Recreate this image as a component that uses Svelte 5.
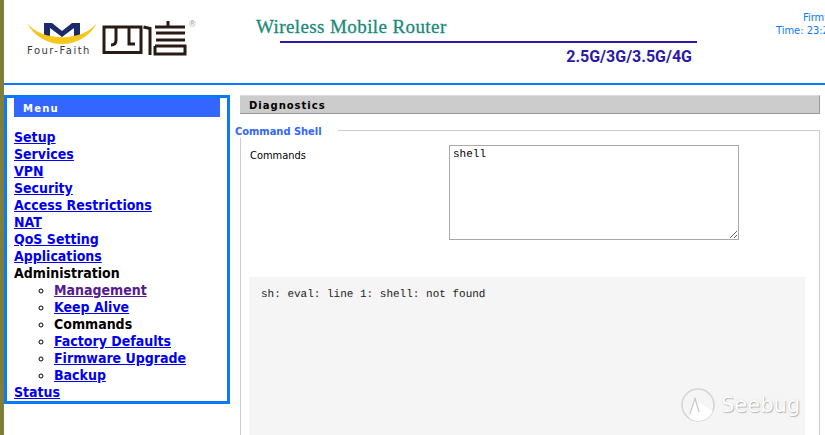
<script lang="ts">
  const adminLinks = [
    { label: "Management", visited: true },
    { label: "Keep Alive" },
    { label: "Commands", current: true },
    { label: "Factory Defaults" },
    { label: "Firmware Upgrade" },
    { label: "Backup" },
  ];
  const topLinks = ["Setup", "Services", "VPN", "Security", "Access Restrictions", "NAT", "QoS Setting", "Applications"];
</script>

<div class="page">
  <header class="header">
    <div class="logo">
      <svg width="200" height="60" viewBox="4 0 200 60" aria-label="Four-Faith logo">
        <path d="M44 38 V23 H52 L62 31 L72 23 H80 V38 H74 V28 L62 37 L50 28 V38Z" fill="#1b2a6b" />
        <path d="M27 23 C42 42 82 42 97 23 C82 51 42 51 27 23Z" fill="#f7c61a" />
        <text x="27" y="54" class="logo__name">Four-Faith</text>
        <g fill="none" stroke="#2a1a14" stroke-width="3">
          <path d="M104 27 H141 V52.500 H104Z" />
          <path d="M116 27 V40 Q116 45 111 45 M129 27 V44 H135" />
          <path d="M143.500 27 L150 28.500 V55" />
          <path d="M155 27 H185 M168 21 V27 M156 33 H185 M156 40 H185 M155 46 H185 V54 H155 V46" />
        </g>
        <text x="189" y="27" class="logo__mark">®</text>
      </svg>
    </div>
    <div class="product">
      <h1 class="product__title">Wireless Mobile Router</h1>
      <div class="product__rule"></div>
      <div class="product__bands">2.5G/3G/3.5G/4G</div>
    </div>
    <div class="status-info">
      <div>Firmware: v1.0</div>
      <div>Time: 23:28:40 up 1 day</div>
    </div>
  </header>

  <main class="body">
    <nav class="menu">
      <div class="menu__title">Menu</div>
      <div class="menu__links">
        {#each topLinks as link}
          <div><a href="#top">{link}</a></div>
        {/each}
        <div class="menu__current">Administration</div>
        <ul class="menu__sub">
          {#each adminLinks as item}
            <li>
              {#if item.current}
                <span class="menu__current">{item.label}</span>
              {:else}
                <a href="#top" class:visited={item.visited}>{item.label}</a>
              {/if}
            </li>
          {/each}
        </ul>
        <div><a href="#top">Status</a></div>
      </div>
    </nav>

    <section class="content">
      <h2 class="content__title">Diagnostics</h2>
      <fieldset class="panel">
        <legend class="panel__legend">Command Shell</legend>
        <div class="panel__row">
          <div class="panel__label">Commands</div>
          <textarea class="panel__input">shell</textarea>
        </div>
        <pre class="panel__output">sh: eval: line 1: shell: not found</pre>
      </fieldset>
    </section>
  </main>

  <div class="watermark">
    <svg width="38" height="38" viewBox="0 0 38 38">
      <circle cx="18" cy="19" r="16" fill="none" stroke="#d4d4d4" stroke-width="1.5" />
      <path d="M13 13 L33 25 A16 16 0 0 1 9 32 Z" fill="#fff" />
      <path d="M15 12 L19 26 M15 12 L10 28" stroke="#c8c8c8" stroke-width="1.2" fill="none" />
    </svg>
    <span>Seebug</span>
  </div>
</div>

<style>
  :global(body) {
    margin: 0;
    background: #fff;
    overflow: hidden;
  }

  .page {
    position: relative;
    width: 825px;
    height: 435px;
    overflow: hidden;
    box-sizing: border-box;
    border-left: 4px solid #7f7f3a;
    font-family: "DejaVu Sans Condensed", "DejaVu Sans", sans-serif;
  }

  .header {
    display: flex;
    height: 83px;
    border-bottom: 2px solid #0a78ff;
  }

  .logo {
    width: 248px;
    flex: none;
  }

  .logo__name {
    font: 10px "DejaVu Sans", sans-serif;
    letter-spacing: 1.5px;
    fill: #3a3a3a;
  }

  .logo__mark {
    font: 9px "Liberation Sans", sans-serif;
    fill: #999;
  }

  .product {
    width: 445px;
    flex: none;
  }

  .product__title {
    margin: 16px 0 0 4px;
    font: 400 19px/22px "Liberation Serif", serif;
    letter-spacing: 0.4px;
    color: #1a8a78;
    -webkit-text-stroke: 0.3px #1a8a78;
  }

  .product__rule {
    height: 2px;
    margin: 3px 0 0 28px;
    background: #2b1aa8;
  }

  .product__bands {
    margin-top: 4px;
    padding-right: 5px;
    text-align: right;
    font: 700 16px/19px Roboto, sans-serif;
    color: #2b1aa8;
  }

  .status-info {
    flex: 1;
    min-width: 0;
    padding-top: 11px;
    font-size: 11px;
    line-height: 13px;
    color: #0a78ff;
    white-space: nowrap;
    overflow: hidden;
  }

  .status-info div:first-child {
    margin-left: 106px;
  }

  .status-info div:last-child {
    margin-left: 79px;
  }

  .body {
    display: flex;
    align-items: flex-start;
    padding-top: 10px;
  }

  .menu {
    box-sizing: border-box;
    width: 226px;
    flex: none;
    height: 309px;
    border: 3px solid #0a78ff;
    padding: 0 7px;
  }

  .menu__title {
    height: 19px;
    margin-bottom: 12px;
    padding-left: 9px;
    background: #3366ff;
    color: #fff;
    font: 700 10px/21px "DejaVu Sans", sans-serif;
    letter-spacing: 1.2px;
  }

  .menu__links {
    font-size: 14px;
    font-weight: 700;
    line-height: 17px;
  }

  .menu__links a {
    color: #0000ee;
  }

  .menu__links a.visited {
    color: #551a8b;
  }

  .menu__current {
    color: #000;
  }

  .menu__sub {
    margin: 0;
    padding-left: 40px;
    list-style: circle;
  }

  .content {
    flex: 1;
    min-width: 0;
    margin-left: 10px;
    margin-right: 5px;
  }

  .content__title {
    box-sizing: border-box;
    height: 19px;
    margin: 0;
    padding-left: 9px;
    background: #ccc;
    border-top: 1px solid #ddd;
    border-right: 1px solid #999;
    border-bottom: 1px solid #999;
    color: #000;
    font: 700 10px/19px "DejaVu Sans", sans-serif;
    letter-spacing: 1px;
  }

  .panel {
    margin: 9px 0 0;
    padding: 0 14px 0 8px;
    border: 1px solid #ccc;
    height: 320px;
    min-width: 0;
  }

  .panel__legend {
    margin-left: -14px;
    padding: 2px 16px 0 0;
    color: #3366ff;
    font-size: 11px;
    font-weight: 700;
  }

  .panel__row {
    display: flex;
    align-items: flex-start;
    margin-top: 7px;
  }

  .panel__label {
    width: 200px;
    flex: none;
    padding-top: 4px;
    padding-left: 1px;
    margin-right: -1px;
    font-size: 11px;
    line-height: 13px;
    color: #000;
  }

  .panel__input {
    box-sizing: border-box;
    width: 290px;
    height: 95px;
    margin: 0;
    padding: 3px;
    border: 1px solid #aaa;
    background: #fff;
    font: 11px/13px "Liberation Mono", monospace;
    text-rendering: geometricPrecision;
    color: #000;
  }

  .panel__output {
    margin: 37px 0 0;
    padding: 12px 12px;
    height: 300px;
    background: #f5f5f5;
    font: 11px/13px "Liberation Mono", monospace;
    text-rendering: geometricPrecision;
    color: #222;
  }

  .watermark {
    position: absolute;
    left: 676px;
    top: 386px;
    display: flex;
    align-items: center;
    gap: 3px;
    color: #fff;
    font: 21px "DejaVu Sans", sans-serif;
    text-shadow: 1px 1px 1px #b5b5b5, 0 0 1px #c4c4c4;
  }
</style>
